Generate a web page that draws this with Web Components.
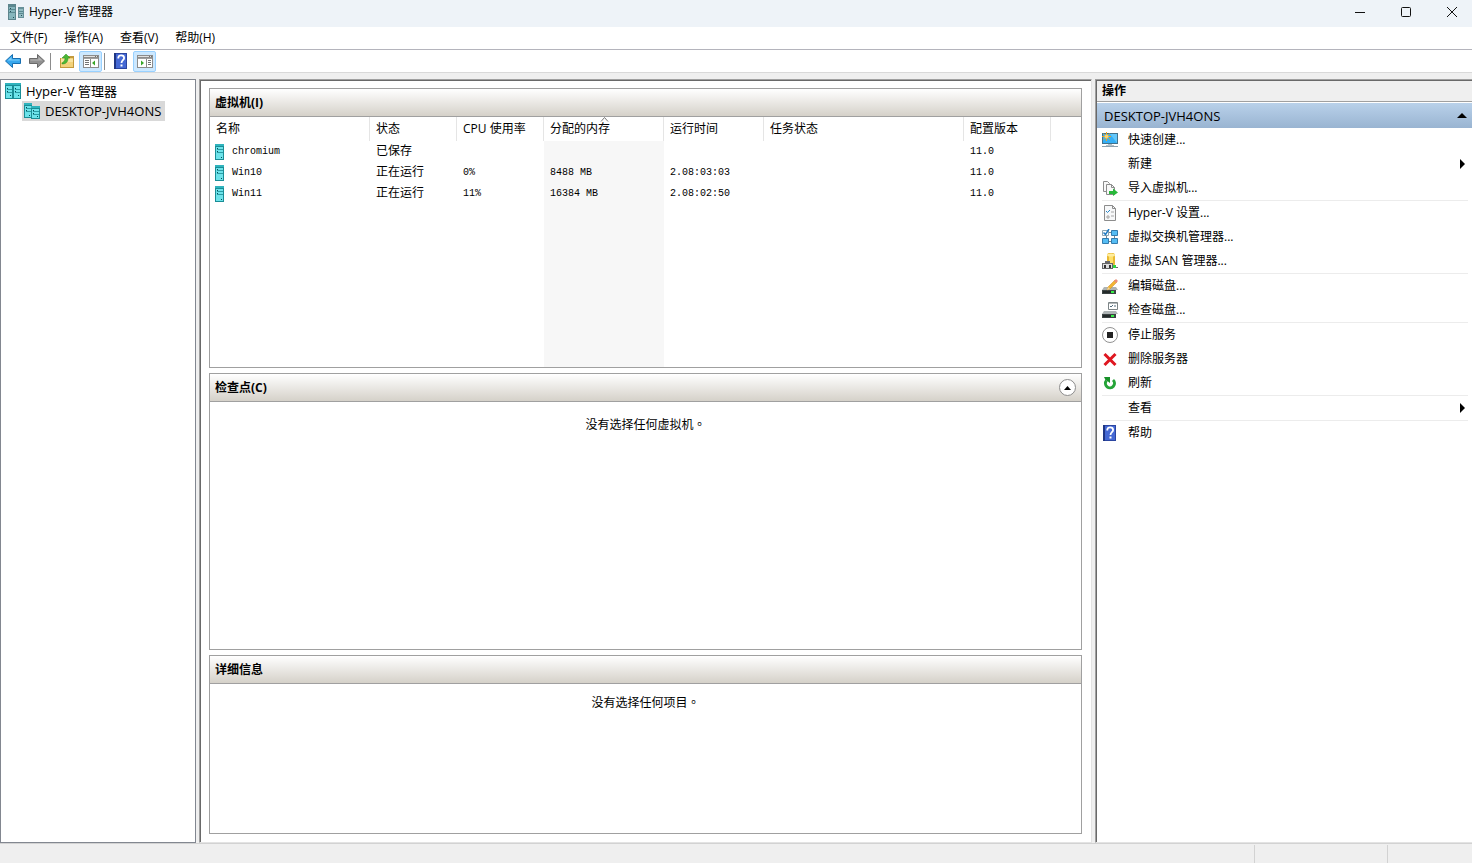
<!DOCTYPE html>
<html lang="zh-CN">
<head>
<meta charset="utf-8">
<title>Hyper-V 管理器</title>
<style>
html,
body {
	margin: 0;
	height: 100%;
}

body {
	--face: #efefef;
	--line: #a0a0a0;
	--line-dark: #696969;
	--line-light: #e3e3e3;
	font: 12px/20px "Open Sans", "Noto Sans CJK SC", sans-serif;
	color: #000;
	background: var(--face);
}
</style>
</head>
<body>
<hv-window>
	<hv-titlebar slot="title">Hyper-V 管理器</hv-titlebar>
	<hv-menubar slot="menu"></hv-menubar>
	<hv-toolbar slot="tools"></hv-toolbar>
	<hv-tree slot="tree"></hv-tree>
	<hv-panel slot="main" heading="虚拟机(I)"><hv-machines></hv-machines></hv-panel>
	<hv-panel slot="main" heading="检查点(C)" collapsible><hv-empty lang="zh-Hant">没有选择任何虚拟机。</hv-empty></hv-panel>
	<hv-panel slot="main" heading="详细信息"><hv-empty lang="zh-Hant" compact>没有选择任何项目。</hv-empty></hv-panel>
	<hv-actions slot="actions" heading="操作" host="DESKTOP-JVH4ONS"></hv-actions>
	<hv-statusbar slot="status"></hv-statusbar>
</hv-window>

<script>
const reset = `
:host,
*,
*::before,
*::after {
	box-sizing: border-box;
}

button {
	margin: 0;
	padding: 0;
	border: 0;
	background: none;
	font: inherit;
	color: inherit;
	text-align: left;
}
`;

function define(name, html, setup) {
	const template = document.createElement('template');
	template.innerHTML = html;

	window.customElements.define(name, class extends HTMLElement {
		connectedCallback() {
			if (!this.shadowRoot) {
				this.attachShadow({ mode: 'open' });
				this.shadowRoot.appendChild(template.content.cloneNode(true));
				if (setup) setup(this, this.shadowRoot);
			}
		}
	});
}

const help = `
	<path d="M1 0h13v16H1z" fill="#2b45a0"/>
	<path d="M3 1h10v14H3z" fill="#4468d4"/>
	<path d="M1 0h2v16H1z" fill="#1f3684"/>
	<path d="M5.300 5.500V4.600C5.500 3 6.700 2.400 8.200 2.400c1.700 0 2.900 1 2.900 2.500 0 2.100-2.600 2.400-2.600 5" fill="none" stroke="#fff" stroke-width="1.800"/>
	<path d="M7.500 11.500h2v2h-2z" fill="#fff"/>`;

// A rack server with two drive bays, drawn from its top left corner
const server = (x, y, w, h) => `
	<path d="M${x} ${y}h${w}v${h}h-${w}z" fill="#1a8d96"/>
	<path d="M${x + 1} ${y + 3}h${w - 2}v${h - 4}h-${w - 2}z" fill="#6de3ea"/>
	<path d="M${x} ${y}h${w}v2h-${w}z" fill="#2fb3bd"/>
	<path d="M${x + 2} ${y + 5}h${w - 3}v1h-${w - 3}zM${x + 2} ${y + 8}h${w - 3}v1h-${w - 3}z" fill="#2a9ca5"/>
	<path d="M${x + 2} ${y + 4}h1v1h-1zM${x + 2} ${y + 7}h1v1h-1zM${x + w - 3} ${y + h - 3}h1v1h-1z" fill="#074e58"/>`;

const disk = `
	<path d="M2 9h12l2 3H0z" fill="#aeb4b5"/>
	<path d="M0 12h14v4H0z" fill="#3c4444"/>
	<path d="M1 13h9v2H1z" fill="#252b2b"/>
	<path d="M9 13h3v2H9z" fill="#36ef47"/>`;

const icons = {
	app: `
		<path d="M0 0h8v16H0z" fill="#5d858d"/>
		<path d="M1 3h6v12H1z" fill="#86b6bd"/>
		<path d="M1 1h6v1H1zM1 5h6v1H1zM1 8h6v1H1z" fill="#5a8991"/>
		<path d="M2 4h1v1H2zM2 7h1v1H2zM5 13h1v1H5z" fill="#244e57"/>
		<path d="M10 3h6v11h-6z" fill="#68919a"/>
		<path d="M11 5h4v8h-4z" fill="#91bbc1"/>
		<path d="M11 7h4v1h-4zM11 9h4v1h-4z" fill="#5a8991"/>
		<path d="M13 11h1v1h-1z" fill="#244e57"/>`,
	back: `
		<path d="M.500 8 7.500 1.500v4h8v5h-8v4z" fill="#37a7ed" stroke="#176eb0"/>
		<path d="M2.500 7.500 6.500 4v2.500h8v1z" fill="#7ccdf9"/>`,
	forward: `
		<path d="M15.500 8 8.500 1.500v4h-8v5h8v4z" fill="#909090" stroke="#696969"/>
		<path d="M13.500 7.500 9.500 4v2.500h-8v1z" fill="#b6b6b6"/>`,
	folder: `
		<path d="M1 5h5l1-2h8v12H1z" fill="#c39a3d"/>
		<path d="M2 5h12v9H2z" fill="#f2d27b"/>
		<path d="M2 6h12v3H2z" fill="#f9e4a1"/>
		<path d="M3 10c2-1 3-3 3-5H3l4-4 4 4H9c0 4-2 6-6 6z" fill="#4bb735" stroke="#2f8f25" stroke-width=".500"/>`,
	paneLeft: `
		<path d="M0 2h16v13H0z" fill="#8c8c8c"/>
		<path d="M1 3h14v1H1z" fill="#e1e1e1"/>
		<path d="M1 6h14v8H1z" fill="#fff"/>
		<path d="M1 5h14v1H1z" fill="#a0a0a0"/>
		<path d="M7 6h1v8H7z" fill="#8c8c8c"/>
		<path d="M2 7h4v1H2zM2 9h4v1H2zM2 11h4v1H2zM12 3h1v1h-1zM14 3h1v1h-1z" fill="#727272"/>
		<path d="m12 7.500v5L9 10z" fill="#38a629"/>`,
	paneRight: `
		<path d="M0 2h16v13H0z" fill="#8c8c8c"/>
		<path d="M1 3h14v1H1z" fill="#e1e1e1"/>
		<path d="M1 6h14v8H1z" fill="#fff"/>
		<path d="M1 5h14v1H1z" fill="#a0a0a0"/>
		<path d="M9 6h1v8H9z" fill="#8c8c8c"/>
		<path d="M11 7h3v1h-3zM11 9h3v1h-3zM11 11h3v1h-3zM12 3h1v1h-1zM14 3h1v1h-1z" fill="#727272"/>
		<path d="m4 7.500v5L7 10z" fill="#38a629"/>`,
	help,
	root: `
		<path d="M0 0h16v16H0z" fill="#1a8d96"/>
		<path d="M0 0h16v2H0z" fill="#2fb3bd"/>
		<path d="M1 3h6v12H1zM9 3h6v12H9z" fill="#6de3ea"/>
		<path d="M2 6h5v1H2zM2 9h5v1H2zM10 6h5v1h-5zM10 9h5v1h-5z" fill="#2a9ca5"/>
		<path d="M2 5h1v1H2zM2 8h1v1H2zM10 5h1v1h-1zM10 8h1v1h-1zM5 12h1v1H5zM13 12h1v1h-1z" fill="#074e58"/>`,
	host: server(0, 0, 8, 15) + server(7, 3, 9, 13),
	machine: server(3, 0, 9, 16),
	create: `
		<path d="M0 1h16v11H0z" fill="#41728c"/>
		<path d="M1 2h14v9H1z" fill="#35aff5"/>
		<path d="M8 2h7v9z" fill="#62c7fb"/>
		<path d="M6 12h4v1H6zM4 13h8v1H4z" fill="#b4bfc5"/>
		<path d="M0 14h16v1H0z" fill="#8ba0ad"/>
		<path d="M4.500 0v9M0 4.500h9M1.500 1.500l6 6M7.500 1.500l-6 6" stroke="#f1a21d"/>
		<circle cx="4.500" cy="4.500" r="2" fill="#ffd369"/>`,
	import: `
		<path d="M1.500 1.500h4l2 2v8h-6z" fill="#f8f8f8" stroke="#8c8c8c"/>
		<path d="M4.500 4.500h5l3 3v7h-8z" fill="#f8f8f8" stroke="#8c8c8c"/>
		<path d="M9.500 4.500v3h3" fill="none" stroke="#8c8c8c"/>
		<path d="M7 11h4V8.500l5 4-5 3.500v-2H7z" fill="#29b83a"/>`,
	settings: `
		<path d="M2.500.500h8l3 3v12h-11z" fill="#f7f8f9" stroke="#8c8c8c"/>
		<path d="M10.500.500v3h3" fill="none" stroke="#8c8c8c"/>
		<path d="m4 6 1.500 1.500L8 5" fill="none" stroke="#2684c7"/>
		<path d="M9 7h3M9 11h3M5 11h2v2H5z" fill="none" stroke="#a6a6a6"/>`,
	network: `
		<path d="M4.500 6v5M12.500 6v5M6 3.500h5M6 12.500h5" stroke="#718791" fill="none"/>
		<path d="M9.500 1.500h6v5h-6zM.500 9.500h6v5h-6zM9.500 9.500h6v5h-6z" fill="#55bdf4" stroke="#347cae"/>
		<path d="M.500 1.500h6v5h-6z" fill="#fff" stroke="#8aa4b2"/>
		<path d="m1.500 3.500 2 2L7 0" fill="none" stroke="#237dc4" stroke-width="1.500"/>`,
	san: `
		<path d="M5 2c0-3 8-3 8 0v9c0 3-8 3-8 0z" fill="#e8b932"/>
		<path d="M7 3h4v9H7z" fill="#ffe06c"/>
		<ellipse cx="9" cy="2" rx="4" ry="1.500" fill="#ffed9e"/>
		<path d="M3 8h5v2H3zM11 14h5v1h-5z" fill="#6a6a6a"/>
		<path d="M11 12h3v3h-3z" fill="#32d441"/>
		<path d="M0 10h11v6H0z" fill="#666"/>
		<path d="M1 11h9v4H1z" fill="#ddd"/>
		<path d="M2 12h2v3H2zM7 12h2v3H7z" fill="#333"/>`,
	editDisk: disk + `
		<path d="m5 12 1-3 7-7 2 2-7 7z" fill="#f3b632" stroke="#ca8b25" stroke-width=".500"/>
		<path d="m12 3 2-2 2 2-2 2z" fill="#ec8d77"/>
		<path d="m5 12 1-3 2 2z" fill="#eed7a6"/>`,
	inspectDisk: disk + `
		<path d="M6.500.500h9v7h-9z" fill="#fff" stroke="#7d8587"/>
		<path d="M7 1h8v1H7z" fill="#b2b8ba"/>
		<path d="m8 4 1 1 2-2M12 4h2" fill="none" stroke="#526d7e"/>`,
	stop: `
		<circle cx="8" cy="8" r="7.500" fill="#fff" stroke="#929292"/>
		<path d="M5 5h6v6H5z" fill="#222"/>`,
	remove: `
		<path d="m2.500 3 11 11M13.500 3l-11 11" fill="none" stroke="#df1720" stroke-width="3"/>`,
	refresh: `
		<path d="M4.500 5.500A4.500 4.500 0 1 0 11 5" fill="none" stroke="#25a438" stroke-width="3"/>
		<path d="M2 2h6v6L6 6.500 3.500 5z" fill="#189129"/>`,
	minimize: '<path d="M3 8h10" stroke="#111" shape-rendering="crispEdges"/>',
	maximize: '<rect x="3.500" y="3.500" width="9" height="9" rx="1" fill="none" stroke="#111"/>',
	close: '<path d="m3 3 10 10M13 3 3 13" stroke="#111" fill="none"/>',
	up: '<path d="M3 10h10L8 5z"/>',
	right: '<path d="M6 3v10l5-5z"/>'
};

define('hv-icon', `
<style>
:host {
	display: block;
	flex: none;
	width: 16px;
	height: 16px;
}

svg {
	display: block;
}
</style>
<svg width="16" height="16" viewBox="0 0 16 16" aria-hidden="true"></svg>
`, (el, root) => {
	root.querySelector('svg').innerHTML = icons[el.getAttribute('name')] || '';
});

define('hv-window', `
<style>
${reset}
:host {
	display: grid;
	grid-template-rows: auto auto auto minmax(0, 1fr) auto;
	height: 100vh;
	overflow: hidden;
}

.work {
	display: grid;
	grid-template-columns: 196px minmax(0, 1fr) 377px;
	gap: 3px;
	padding-top: 6px;
	min-height: 0;
}

main {
	display: grid;
	grid-template-rows: minmax(0, 280fr) minmax(0, 277fr) minmax(0, 179fr);
	gap: 5px;
	padding: 8px 9px;
	background: #fff;
	border: 1px solid;
	border-color: var(--line) var(--line-light) var(--line-light) var(--line);
	box-shadow: inset 1px 1px var(--line-dark);
}
</style>
<slot name="title"></slot>
<slot name="menu"></slot>
<slot name="tools"></slot>
<div class="work">
	<slot name="tree"></slot>
	<main><slot name="main"></slot></main>
	<slot name="actions"></slot>
</div>
<slot name="status"></slot>
`);

define('hv-titlebar', `
<style>
${reset}
:host {
	display: flex;
	align-items: center;
	gap: 5px;
	height: 27px;
	padding: 0 0 4px 8px;
	background: #eef3f8;
}

.caption {
	flex: 1;
}

.buttons {
	display: flex;
	gap: 6px;
}

button {
	display: grid;
	place-items: center;
	width: 40px;
	height: 23px;
}
</style>
<hv-icon name="app"></hv-icon>
<span class="caption"><slot></slot></span>
<div class="buttons">
	<button type="button" aria-label="最小化"><hv-icon name="minimize"></hv-icon></button>
	<button type="button" aria-label="最大化"><hv-icon name="maximize"></hv-icon></button>
	<button type="button" aria-label="关闭"><hv-icon name="close"></hv-icon></button>
</div>
`);

define('hv-menubar', `
<style>
${reset}
:host {
	display: block;
	background: #fff;
	border-bottom: 1px solid #b4b4bc;
}

nav {
	display: flex;
	gap: 1px;
	height: 22px;
	padding-left: 2px;
}

button {
	padding: 0 8px;
}
</style>
<nav>
	<button type="button">文件(F)</button>
	<button type="button">操作(A)</button>
	<button type="button">查看(V)</button>
	<button type="button">帮助(H)</button>
</nav>
`);

define('hv-toolbar', `
<style>
${reset}
:host {
	display: flex;
	align-items: center;
	gap: 1px;
	height: 23px;
	padding-left: 1px;
	background: #fff;
	border-bottom: 1px solid #d9d9d9;
}

button {
	display: grid;
	place-items: center;
	width: 23px;
	height: 21px;
}

button[aria-pressed="true"] {
	background: #cce8ff;
	border: 1px solid #99d1ff;
	border-radius: 2px;
}

hr {
	width: 1px;
	height: 17px;
	margin: 0 3px 0 1px;
	border: 0;
	background: #8c8c8c;
}
</style>
<button type="button" aria-label="后退"><hv-icon name="back"></hv-icon></button>
<button type="button" aria-label="前进"><hv-icon name="forward"></hv-icon></button>
<hr>
<button type="button" aria-label="向上"><hv-icon name="folder"></hv-icon></button>
<button type="button" aria-label="控制台树" aria-pressed="true"><hv-icon name="paneLeft"></hv-icon></button>
<hr>
<button type="button" aria-label="帮助"><hv-icon name="help"></hv-icon></button>
<button type="button" aria-label="操作窗格" aria-pressed="true"><hv-icon name="paneRight"></hv-icon></button>
`);

define('hv-tree', `
<style>
${reset}
:host {
	display: block;
	padding: 1px 0 0 3px;
	background: #fff;
	border: 1px solid #828790;
	font-size: 13px;
}

ul {
	margin: 0;
	padding: 0;
	list-style: none;
}

ul ul {
	padding-left: 18px;
}

button {
	display: flex;
	align-items: center;
	gap: 5px;
	height: 20px;
	padding: 0 4px 0 1px;
}

button[aria-current] {
	padding-left: 2px;
	background: #d9d9d9;
}
</style>
<ul>
	<li>
		<button type="button"><hv-icon name="root"></hv-icon>Hyper-V 管理器</button>
		<ul>
			<li><button type="button" aria-current="true"><hv-icon name="host"></hv-icon>DESKTOP-JVH4ONS</button></li>
		</ul>
	</li>
</ul>
`);

define('hv-panel', `
<style>
${reset}
:host {
	display: flex;
	flex-direction: column;
	min-height: 0;
	border: 1px solid var(--line);
}

header {
	display: flex;
	flex: none;
	align-items: center;
	justify-content: space-between;
	height: 28px;
	padding: 0 5px;
	background: linear-gradient(#fff, #d5d1c9);
	border-bottom: 1px solid var(--line);
}

h2 {
	margin: 0;
	font-size: 12px;
}

button {
	display: grid;
	place-items: center;
	width: 17px;
	height: 17px;
	background: #fff;
	border: 1px solid #8c8c8c;
	border-radius: 50%;
}

.body {
	flex: 1;
	min-height: 0;
}
</style>
<header><h2></h2></header>
<div class="body"><slot></slot></div>
`, (el, root) => {
	root.querySelector('h2').textContent = el.getAttribute('heading');
	if (el.hasAttribute('collapsible')) {
		root.querySelector('header').insertAdjacentHTML('beforeend', `
			<button type="button" aria-label="折叠">
				<svg width="7" height="4" viewBox="0 0 7 4"><path d="M0 4h7L3.500 0z"/></svg>
			</button>`);
	}
});

define('hv-empty', `
<style>
:host {
	display: block;
	padding-top: 12px;
	text-align: center;
	font-family: "Noto Sans CJK TC", sans-serif;
}

:host([compact]) {
	padding-top: 8px;
}
</style>
<slot></slot>
`);

const machines = [
	['chromium', '已保存', '', '', '', '', '11.0'],
	['Win10', '正在运行', '0%', '8488 MB', '2.08:03:03', '', '11.0'],
	['Win11', '正在运行', '11%', '16384 MB', '2.08:02:50', '', '11.0']
];

define('hv-machines', `
<style>
${reset}
:host {
	display: block;
	height: 100%;
}

table {
	width: 100%;
	height: 100%;
	table-layout: fixed;
	border-collapse: collapse;
}

th,
td {
	padding: 0 6px;
	text-align: left;
	font-weight: normal;
	white-space: nowrap;
}

th {
	height: 24px;
	background: linear-gradient(#e5e5e5, #e5e5e5) right / 1px 100% no-repeat;
}

th:last-child {
	background: none;
}

th.sorted {
	position: relative;
}

th.sorted svg {
	position: absolute;
	top: 0;
	left: calc(50% - 4px);
}

td {
	height: 21px;
	font: 10px/20px "Liberation Mono", "Noto Sans CJK SC", monospace;
}

td.state {
	padding-top: 1px;
	font-size: 12px;
}

td:nth-child(4) {
	background: #f7f7f7;
}

.fill td {
	height: auto;
}

.name {
	display: flex;
	align-items: center;
	gap: 4px;
	margin-left: -4px;
}
</style>
<table>
	<colgroup>
		<col width="160"><col width="87"><col width="87"><col width="120"><col width="100"><col width="200"><col width="87"><col>
	</colgroup>
	<thead>
		<tr>
			<th>名称</th>
			<th>状态</th>
			<th>CPU 使用率</th>
			<th class="sorted" aria-sort="ascending">分配的内存<svg width="9" height="5" viewBox="0 0 9 5"><path d="m1 4.500 3.500-4 3.500 4" fill="none" stroke="#777"/></svg></th>
			<th>运行时间</th>
			<th>任务状态</th>
			<th>配置版本</th>
			<th></th>
		</tr>
	</thead>
	<tbody></tbody>
</table>
`, (el, root) => {
	const rows = machines.map(([name, state, ...rest]) => `
		<tr>
			<td><span class="name"><hv-icon name="machine"></hv-icon>${name}</span></td>
			<td class="state">${state}</td>
			${rest.map(text => `<td>${text}</td>`).join('')}
			<td></td>
		</tr>`);
	rows.push(`<tr class="fill">${'<td></td>'.repeat(8)}</tr>`);
	root.querySelector('tbody').innerHTML = rows.join('');
});

// [icon, label, opens a submenu]; each group is closed by a rule
const actions = [
	[['create', '快速创建...'], ['', '新建', true], ['import', '导入虚拟机...']],
	[['settings', 'Hyper-V 设置...'], ['network', '虚拟交换机管理器...'], ['san', '虚拟 SAN 管理器...']],
	[['editDisk', '编辑磁盘...'], ['inspectDisk', '检查磁盘...']],
	[['stop', '停止服务'], ['remove', '删除服务器'], ['refresh', '刷新']],
	[['', '查看', true]],
	[['help', '帮助']]
];

define('hv-actions', `
<style>
${reset}
:host {
	display: block;
	padding: 1px 0 0 1px;
	background: #fff;
	border: 1px solid;
	border-color: var(--line) transparent var(--line-light) var(--line);
	border-right: 0;
	box-shadow: inset 1px 1px var(--line-dark);
}

h2 {
	height: 21px;
	margin: 0 0 1px;
	padding-left: 5px;
	background: var(--face);
	border-bottom: 1px solid var(--line);
	font-size: 12px;
}

.host {
	display: flex;
	align-items: center;
	justify-content: space-between;
	width: 100%;
	height: 25px;
	padding: 0 2px 0 7px;
	background: linear-gradient(#b9d1ea, #99b4d1);
	font-size: 13px;
}

ul {
	margin: 0 4px 0 5px;
	padding: 0;
	list-style: none;
}

ul:not(:last-child) {
	border-bottom: 1px solid #ececec;
}

li button {
	display: flex;
	align-items: center;
	gap: 10px;
	width: 100%;
	height: 24px;
}

.label {
	flex: 1;
}

li hv-icon:last-child {
	margin-right: -2px;
}
</style>
<h2></h2>
<button class="host" type="button"><span></span><hv-icon name="up"></hv-icon></button>
`, (el, root) => {
	root.querySelector('h2').textContent = el.getAttribute('heading');
	root.querySelector('.host span').textContent = el.getAttribute('host');
	for (const group of actions) {
		const list = document.createElement('ul');
		list.innerHTML = group.map(([icon, label, more]) => `
			<li><button type="button"><hv-icon name="${icon}"></hv-icon><span class="label">${label}</span>${more ? '<hv-icon name="right"></hv-icon>' : ''}</button></li>`).join('');
		root.appendChild(list);
	}
});

define('hv-statusbar', `
<style>
${reset}
:host {
	display: grid;
	grid-template-columns: minmax(0, 1fr) 133px 85px;
	height: 20px;
	padding-top: 1px;
	background: var(--face);
	border-top: 1px solid #d2d2d2;
}

span + span {
	border-left: 1px solid #d2d2d2;
}
</style>
<span></span><span></span><span></span>
`);
</script>
</body>
</html>
